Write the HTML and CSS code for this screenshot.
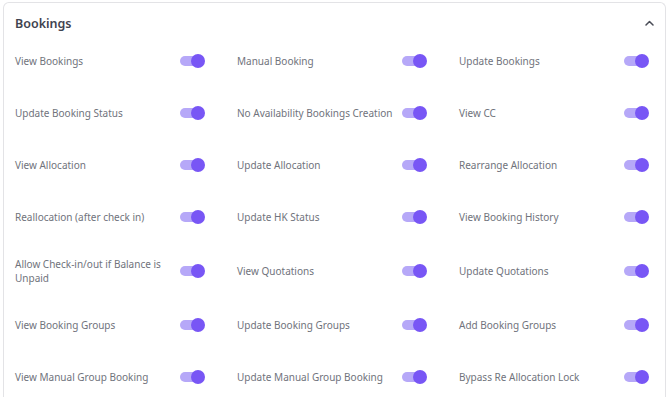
FILE: index.html
```html
<!DOCTYPE html>
<html lang="en">
<head>
    <meta charset="UTF-8">
    <meta name="viewport" content="width=device-width, initial-scale=1.0">
    <title>Permissions - Bookings</title>
    <link rel="stylesheet" href="styles.css">
</head>

<body>
    <div class="perm-card">
        <div class="perm-header">
            <h2>Bookings</h2>
            <svg class="chevron" width="9" height="6" viewBox="0 0 9 6">
                <path d="M1 5 L4.5 1.5 L8 5" fill="none" stroke="#4a4d57" stroke-width="1.5" stroke-linecap="round" stroke-linejoin="round"/>
            </svg>
        </div>

        <div class="perm-grid">
            <div class="perm-item"><span>View Bookings</span><span class="toggle"></span></div>
            <div class="perm-item"><span>Manual Booking</span><span class="toggle"></span></div>
            <div class="perm-item"><span>Update Bookings</span><span class="toggle"></span></div>

            <div class="perm-item"><span>Update Booking Status</span><span class="toggle"></span></div>
            <div class="perm-item"><span>No Availability Bookings Creation</span><span class="toggle"></span></div>
            <div class="perm-item"><span>View CC</span><span class="toggle"></span></div>

            <div class="perm-item"><span>View Allocation</span><span class="toggle"></span></div>
            <div class="perm-item"><span>Update Allocation</span><span class="toggle"></span></div>
            <div class="perm-item"><span>Rearrange Allocation</span><span class="toggle"></span></div>

            <div class="perm-item"><span>Reallocation (after check in)</span><span class="toggle"></span></div>
            <div class="perm-item"><span>Update HK Status</span><span class="toggle"></span></div>
            <div class="perm-item"><span>View Booking History</span><span class="toggle"></span></div>

            <div class="perm-item"><span class="narrow">Allow Check-in/out if Balance is Unpaid</span><span class="toggle"></span></div>
            <div class="perm-item"><span>View Quotations</span><span class="toggle"></span></div>
            <div class="perm-item"><span>Update Quotations</span><span class="toggle"></span></div>

            <div class="perm-item"><span>View Booking Groups</span><span class="toggle"></span></div>
            <div class="perm-item"><span>Update Booking Groups</span><span class="toggle"></span></div>
            <div class="perm-item"><span>Add Booking Groups</span><span class="toggle"></span></div>

            <div class="perm-item"><span>View Manual Group Booking</span><span class="toggle"></span></div>
            <div class="perm-item"><span>Update Manual Group Booking</span><span class="toggle"></span></div>
            <div class="perm-item"><span>Bypass Re Allocation Lock</span><span class="toggle"></span></div>
        </div>
    </div>
</body>

</html>
```

FILE: styles.css
```css
body {
    margin: 0;
    padding: 2px 4px 0 3px;
    font-family: 'Noto Sans', Arial, sans-serif;
    background: #fff;
}

.perm-card {
    border: 1px solid #e3e3e6;
    border-bottom: none;
    border-radius: 6px 6px 0 0;
    padding: 0 16px 0 11px;
    height: 420px;
}

.perm-header {
    display: flex;
    align-items: center;
    justify-content: space-between;
    height: 40px;
    margin-bottom: 4px;
}

.perm-header h2 {
    margin: 0;
    font-size: 12.5px;
    font-weight: 600;
    color: #3f4350;
}

.chevron {
    margin-right: -5px;
}

.perm-grid {
    display: grid;
    grid-template-columns: repeat(3, 190px);
    column-gap: 32px;
    row-gap: 24px;
}

.perm-item {
    display: flex;
    align-items: center;
    justify-content: space-between;
    min-height: 28px;
    font-size: 10px;
    line-height: 14px;
    color: #70737c;
    white-space: nowrap;
}

.perm-item .narrow {
    max-width: 150px;
    padding: 2px 0;
    white-space: normal;
}

.toggle {
    position: relative;
    flex: none;
    width: 25px;
    height: 14px;
}

.toggle::before {
    content: "";
    position: absolute;
    left: 0;
    top: 2px;
    width: 20px;
    height: 10px;
    border-radius: 5px;
    background: #b6a8f8;
}

.toggle::after {
    content: "";
    position: absolute;
    right: 0;
    top: 0;
    width: 14px;
    height: 14px;
    border-radius: 50%;
    background: #7856f5;
}
```
